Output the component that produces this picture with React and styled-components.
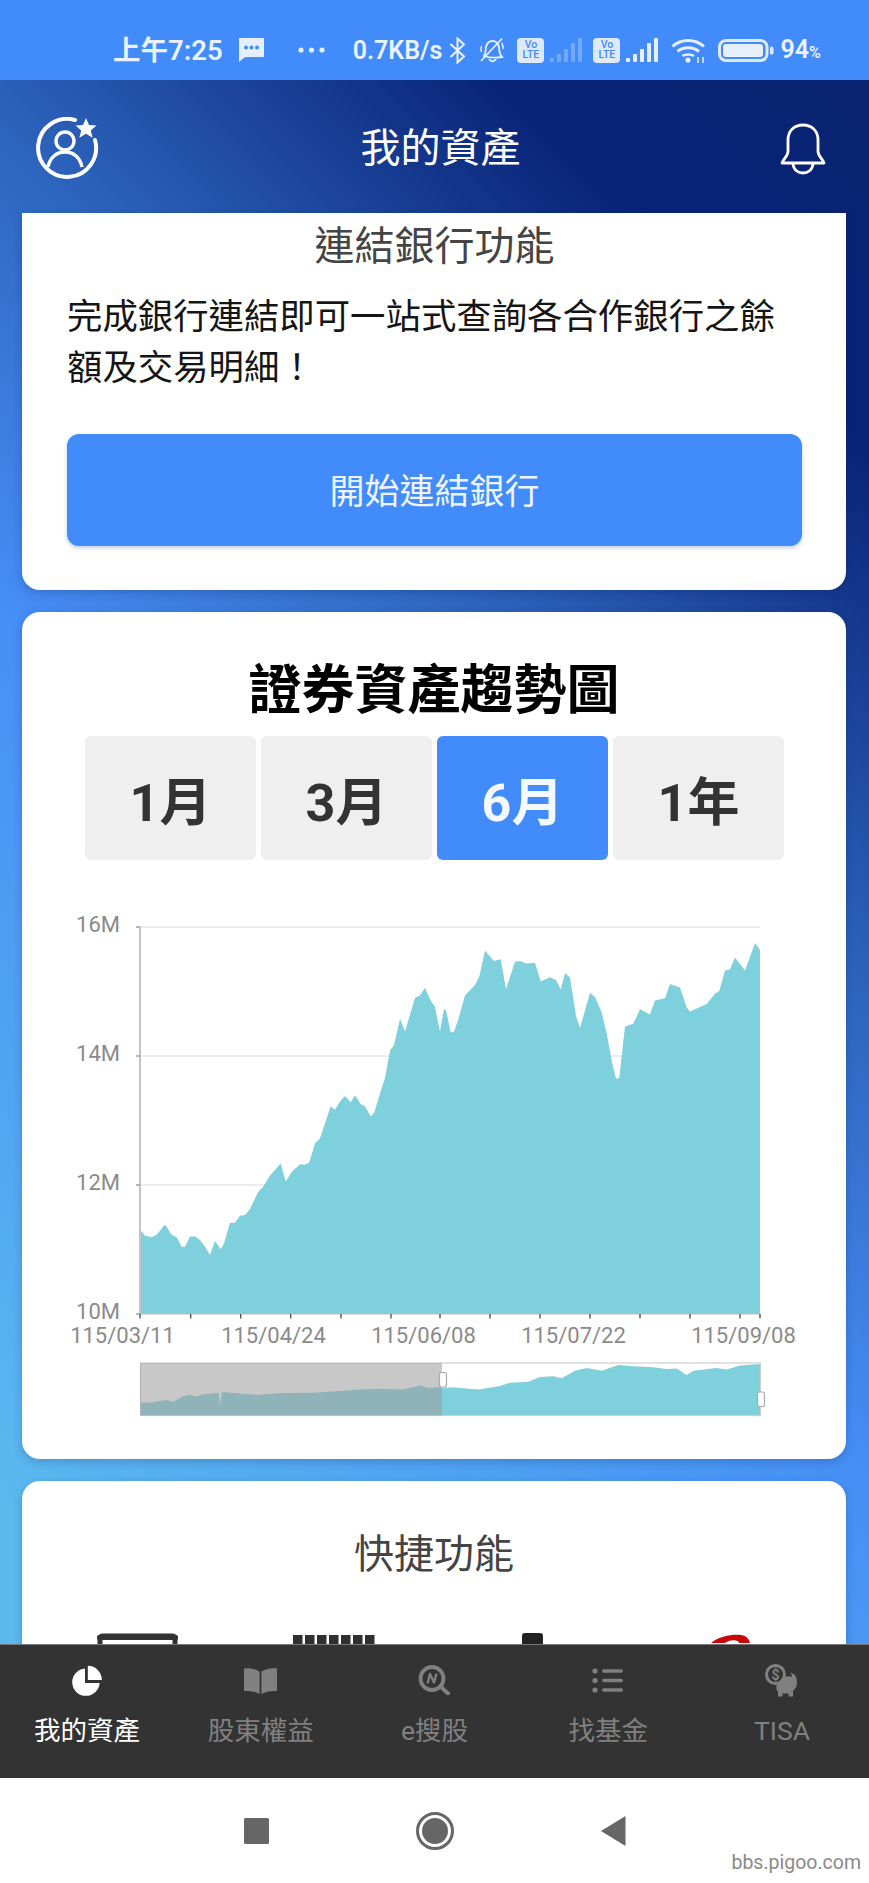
import React from 'react';
import styled, { createGlobalStyle } from 'styled-components';

const FONT = `Roboto, "Noto Sans CJK TC", sans-serif`;

const Global = createGlobalStyle`
  html, body { margin: 0; padding: 0; background: #fff; }
  * { box-sizing: border-box; }
`;

const Phone = styled.div`
  width: 869px;
  height: 1883px;
  display: flex;
  flex-direction: column;
  overflow: hidden;
  font-family: ${FONT};
  position: relative;
`;

/* ---------- status bar ---------- */
const StatusBar = styled.div`
  flex: 0 0 80px;
  background: #428bfa;
  display: flex;
  align-items: center;
  padding: 20px 0 0 113px;
  color: #eaf2ff;
`;
const StatusText = styled.span`
  font-size: ${p => p.$size || 25}px;
  font-weight: 600;
  line-height: 30px;
  padding-top: 2px;
  margin-left: ${p => p.$ml || 0}px;
  white-space: nowrap;
`;
const Percent = styled.span`
  font-size: 16px;
`;
const StatusIcon = styled.svg`
  display: block;
  flex: none;
  margin-left: ${p => p.$ml || 0}px;
  opacity: ${p => p.$dim ? 0.3 : 1};
`;
const VolteTile = styled.span`
  flex: none;
  width: 27px;
  height: 25px;
  margin-left: ${p => p.$ml}px;
  border-radius: 4px;
  background: #dfe9fc;
  color: #428bfa;
  display: flex;
  flex-direction: column;
  align-items: center;
  justify-content: center;
  font: 500 10.5px/10.5px Roboto, sans-serif;
`;

/* ---------- page ---------- */
const Main = styled.main`
  flex: 1 1 0;
  min-height: 0;
  overflow: hidden;
  padding: 0 23px 0 22px;
  background: linear-gradient(45deg, #5bb9ee 0%, #5bb9ee 6%, #458ef5 43%, #2b60b8 64%, #082377 85%, #0a2472 100%);
`;
const Header = styled.header`
  height: 133px;
  margin: 0 19px 0 13px;
  padding-top: 5px;
  display: flex;
  align-items: center;
  justify-content: space-between;
`;
const HeaderTitle = styled.h1`
  margin: 0 0 0 3px;
  font-size: 40px;
  font-weight: 400;
  line-height: 48px;
  color: #fff;
`;
const HeaderIcon = styled.svg`
  display: block;
`;
const Card = styled.section`
  background: #fff;
  border-radius: ${p => p.$flat ? '0 0 18px 18px' : '18px'};
  padding: ${p => p.$pad};
  margin-bottom: 22px;
  box-shadow: 0 3px 10px rgba(10, 30, 90, 0.22);
`;
const SectionTitle = styled.h2`
  margin: 0;
  text-align: center;
  font-size: 40px;
  font-weight: 400;
  line-height: 40px;
  color: #444;
`;
const Paragraph = styled.p`
  margin: 25px 0 40px;
  font-size: 35.4px;
  line-height: 51px;
  color: #151515;
`;
const PrimaryButton = styled.button`
  display: block;
  width: 100%;
  height: 112px;
  border: 0;
  border-radius: 12px;
  padding: 0 0 4px;
  background: #428bfa;
  color: #eef5ff;
  font-family: ${FONT};
  font-size: 35px;
  font-weight: 400;
  box-shadow: 0 2px 4px rgba(50, 90, 160, 0.3);
`;
const ChartTitle = styled.h2`
  margin: 0 0 15px;
  text-align: center;
  font-size: 53px;
  font-weight: 700;
  line-height: 60px;
  color: #000;
`;
const Ranges = styled.div`
  display: grid;
  grid-template-columns: repeat(4, 171px);
  gap: 5px;
  margin: 0 0 39px 41px;
  padding-left: 22px;
`;
const RangeButton = styled.button`
  height: 124px;
  border: 0;
  border-radius: 6px;
  padding: 1px 0 0;
  background: ${p => p.$active ? '#428bfa' : '#efefef'};
  color: ${p => p.$active ? '#f4f8ff' : '#333'};
  font-family: ${FONT};
  font-size: 52px;
  font-weight: 700;
`;
const ChartSvg = styled.svg`
  display: block;
  font-family: Roboto, sans-serif;
`;
const ShortcutRow = styled.div`
  display: grid;
  grid-template-columns: repeat(4, 198px);
  margin-top: 58px;
  justify-items: center;
`;
const ShortcutIcon = styled.svg`
  display: block;
`;

/* ---------- bottom tabs ---------- */
const TabBar = styled.nav`
  flex: 0 0 134px;
  background: #333;
  border-top: 1px solid #777;
  display: grid;
  grid-template-columns: repeat(5, 1fr);
`;
const Tab = styled.div`
  display: flex;
  flex-direction: column;
  align-items: center;
  padding-top: 19px;
  color: ${p => p.$active ? '#fff' : '#808080'};
`;
const TabIconBox = styled.div`
  height: 32px;
  display: flex;
  align-items: center;
  justify-content: center;
`;
const TabLabel = styled.span`
  margin-top: 19px;
  font-size: 26.5px;
  line-height: 32px;
  white-space: nowrap;
`;

/* ---------- android nav ---------- */
const NavBar = styled.div`
  flex: 0 0 105px;
  background: #fff;
  display: flex;
  align-items: center;
  justify-content: center;
  gap: 147px;
  position: relative;
`;
const NavSvg = styled.svg`
  display: block;
`;
const Watermark = styled.span`
  position: absolute;
  right: 8px;
  bottom: 9px;
  font: 400 19.5px/22px Roboto, sans-serif;
  color: #8a8a8a;
`;

/* ---------- chart data (traced) ---------- */
const YS = 2.904;
const z2 = ([x, y]) => [40 + x / 3, 900 + y / YS];
const z3 = ([x, y]) => [420 + x / 3, 900 + y / YS];

const mainPts = [
  ...[[300,960],[315,978],[335,982],[350,975],[375,945],[395,975],[410,982],[425,1010],[435,1010],[450,980],[465,980],[480,990],[495,1010],[510,1033],[525,993],[542,1017],[552,1000],[570,940],[585,940],[600,920],[615,918],[630,900],[655,850],[670,835],[690,803],[722,768],[737,820],[755,793],[780,770],[795,772],[808,765],[825,710],[840,695],[872,602],[885,612],[900,588],[915,572],[932,590],[945,570],[962,595],[975,602],[992,632],[1003,620],[1020,565],[1035,520],[1050,440],[1062,425],[1080,348],[1095,385],[1125,287],[1140,280],[1155,258],[1165,280],[1175,300],[1187,315]].map(z2),
  ...[[45,315],[60,385],[72,320],[78,322],[92,388],[102,385],[115,350],[135,280],[165,250],[178,225],[195,150],[222,180],[242,175],[258,262],[285,182],[300,180],[318,187],[345,185],[362,240],[390,227],[408,235],[422,262],[435,215],[450,228],[468,340],[480,375],[510,272],[525,285],[545,330],[560,390],[575,470],[588,522],[598,520],[615,370],[640,362],[660,320],[690,335],[705,295],[735,288],[750,247],[780,257],[800,315],[810,327],[860,305],[885,275],[898,267],[915,208],[930,205],[945,170],[975,208],[1005,128],[1020,148]].map(z3),
];
const miniPts = [
  ...[[302,1463],[330,1462],[360,1458],[380,1455],[400,1460],[430,1443],[450,1440],[470,1445],[490,1438],[530,1435],[536,1435],[540,1470],[546,1432],[600,1436],[650,1440],[720,1435],[820,1434],[880,1430],[960,1424],[1020,1422],[1090,1424],[1140,1413],[1165,1420]].map(z2),
  ...[[0,1418],[30,1420],[50,1418],[67,1420],[100,1418],[130,1421],[175,1424],[240,1414],[270,1405],[325,1402],[360,1388],[400,1386],[425,1392],[465,1370],[500,1362],[545,1370],[595,1353],[640,1357],[700,1360],[740,1365],[770,1363],[800,1382],[820,1370],[890,1362],[920,1366],[960,1355],[1020,1350]].map(z3),
];
const toArea = (pts, base) =>
  `M${pts[0][0]} ${base} ` + pts.map(p => `L${p[0].toFixed(1)} ${p[1].toFixed(1)}`).join(' ') + ` L${pts[pts.length - 1][0]} ${base} Z`;

const yTicks = [{ y: 928, t: '16M' }, { y: 1057, t: '14M' }, { y: 1186, t: '12M' }, { y: 1315, t: '10M' }];
const xTicks = [140, 190.7, 240.7, 290.7, 341, 391, 440, 490, 540, 590, 640, 690, 740, 760];
const xLabels = [{ x: 122.5, t: '115/03/11' }, { x: 273.5, t: '115/04/24' }, { x: 423.5, t: '115/06/08' }, { x: 573.5, t: '115/07/22' }, { x: 743.5, t: '115/09/08' }];

function Chart() {
  return (
    <ChartSvg width="824" height="545" viewBox="22 900 824 545">
      {yTicks.slice(0, 3).map(g => (
        <line key={g.t} x1="140" x2="760" y1={g.y} y2={g.y} stroke="#e6e6e6" strokeWidth="1.4" />
      ))}
      <path d={toArea(mainPts, 1315)} fill="#7dd0dc" />
      <line x1="140" x2="140" y1="928" y2="1315" stroke="#c4c4c4" strokeWidth="2" />
      <line x1="140" x2="760" y1="1315" y2="1315" stroke="#bdbdbd" strokeWidth="1" />
      {yTicks.map(g => (
        <React.Fragment key={g.t}>
          <line x1="136" x2="140" y1={g.y} y2={g.y} stroke="#999" strokeWidth="1.4" />
          <text x="120" y={g.y + 4.5} textAnchor="end" fontSize="22" fill="#8a8a8a">{g.t}</text>
        </React.Fragment>
      ))}
      {xTicks.map(x => (
        <line key={x} x1={x} x2={x} y1="1315" y2="1319.5" stroke="#555" strokeWidth="1.4" />
      ))}
      {xLabels.map(l => (
        <text key={l.t} x={l.x} y="1344" textAnchor="middle" fontSize="22" fill="#8a8a8a">{l.t}</text>
      ))}
      {/* range slider */}
      <path d={toArea(miniPts, 1416.5)} fill="#7dd0dc" />
      <rect x="140.5" y="1364" width="620" height="52.5" fill="none" stroke="#cfcfcf" strokeWidth="1.2" />
      <rect x="140" y="1364" width="302" height="52.5" fill="rgb(157,157,157)" fillOpacity="0.56" />
      <rect x="439.5" y="1373.5" width="7" height="14.5" rx="2" fill="#fff" stroke="#aaa" strokeWidth="1.2" />
      <rect x="757.5" y="1393" width="7" height="14.5" rx="2" fill="#fff" stroke="#aaa" strokeWidth="1.2" />
    </ChartSvg>
  );
}

/* ---------- small icons ---------- */
const Signal = ({ ml, dim }) => (
  <StatusIcon $ml={ml} $dim={dim} width="33" height="25" viewBox="0 0 33 25" fill="#e6effd">
    <rect x="0" y="20" width="4" height="4" rx="1" />
    <rect x="7" y="16" width="4" height="8" rx="1" />
    <rect x="14" y="11" width="4" height="13" rx="1" />
    <rect x="21" y="5" width="4" height="19" rx="1" />
    <rect x="28" y="0" width="4" height="24" rx="1" />
  </StatusIcon>
);

const PieIcon = () => (
  <svg width="30" height="31" viewBox="0 0 30 31" fill="currentColor">
    <path d="M13 3.5A13.7 13.7 0 1 0 27.6 18H13Z" />
    <path d="M15.8 .8A14 14 0 0 1 29.8 15H15.8Z" />
  </svg>
);
const BookIcon = () => (
  <svg width="33" height="27" viewBox="0 0 33 27" fill="currentColor">
    <path d="M0 1.5C6 .5 11 2 15.6 4.5V27C11 24.5 6 23.5 0 24Z" />
    <path d="M33 1.5C27 .5 22 2 17.4 4.5V27C22 24.5 27 23.5 33 24Z" />
  </svg>
);
const SearchIcon = () => (
  <svg width="32" height="30" viewBox="0 0 32 30" fill="none" stroke="currentColor">
    <circle cx="14" cy="13.5" r="11.5" strokeWidth="3.8" />
    <path d="M22.5 21.5L30 28.5" strokeWidth="3.8" strokeLinecap="round" />
    <path d="M9.5 18.5L12 9L16 17.5L18.5 8.5" strokeWidth="2.4" strokeLinejoin="round" />
  </svg>
);
const ListIcon = () => (
  <svg width="32" height="27" viewBox="0 0 32 27" fill="currentColor">
    <circle cx="3" cy="4" r="2.6" /><rect x="10" y="2.2" width="21" height="3.6" rx="1.8" />
    <circle cx="3" cy="13.5" r="2.6" /><rect x="10" y="11.7" width="21" height="3.6" rx="1.8" />
    <circle cx="3" cy="23" r="2.6" /><rect x="10" y="21.2" width="21" height="3.6" rx="1.8" />
  </svg>
);
const PiggyIcon = () => (
  <svg width="34" height="33" viewBox="0 0 34 33" fill="currentColor">
    <path d="M14 17C19 12 24 11.5 27 13L26 8.5L30 11C31 13 32 15 32 19C32 23 30 25 28 27V32.5H23.5V29.5H17.5V32.5H13V28C10.5 25 11 20 14 17Z" />
    <circle cx="10.5" cy="10.5" r="10.5" />
    <circle cx="10.5" cy="10.5" r="7.5" fill="#333" />
    <text x="10.5" y="15.5" textAnchor="middle" fontSize="14" fontWeight="700" fill="#808080" fontFamily="Roboto, sans-serif">$</text>
  </svg>
);

const tabs = [
  { label: '我的資產', Icon: PieIcon, active: true },
  { label: '股東權益', Icon: BookIcon },
  { label: 'e搜股', Icon: SearchIcon },
  { label: '找基金', Icon: ListIcon },
  { label: 'TISA', Icon: PiggyIcon },
];

export default function App() {
  return (
    <Phone>
      <Global />
      <StatusBar>
        <StatusText $size={27.5}>上午7:25</StatusText>
        <StatusIcon $ml={15} width="27" height="26" viewBox="0 0 27 26">
          <path d="M1 1H26V20H7L1 25Z" fill="#e6effd" />
          <circle cx="8" cy="10.5" r="2" fill="#428bfa" /><circle cx="13.5" cy="10.5" r="2" fill="#428bfa" /><circle cx="19" cy="10.5" r="2" fill="#428bfa" />
        </StatusIcon>
        <StatusIcon $ml={33} width="27" height="6" viewBox="0 0 27 6" fill="#e6effd">
          <circle cx="3" cy="3" r="2.6" /><circle cx="13.5" cy="3" r="2.6" /><circle cx="24" cy="3" r="2.6" />
        </StatusIcon>
        <StatusText $ml={28}>0.7KB/s</StatusText>
        <StatusIcon $ml={7} width="17" height="27" viewBox="0 0 17 27" fill="none" stroke="#e6effd" strokeWidth="2">
          <path d="M1.5 7L15 19.5L8.5 25.5V1.5L15 7.5L1.5 20" />
        </StatusIcon>
        <StatusIcon $ml={12} width="27" height="26" viewBox="0 0 27 26" fill="none" stroke="#e6effd" strokeWidth="1.8">
          <path d="M6 19C8 16 7.5 13 8 10C9 6 12 4 14.5 4C18 4 20.5 7 21 10.5C21.5 14 21 17 24 20C17 21 11 21 6 19Z" />
          <path d="M11 22C13 25 16 25 18 22" />
          <path d="M3 24L24 1.5" />
          <path d="M3.5 9C2.5 11 2.5 13 3.5 15M23.5 6C25 8 25.5 10 25 12" strokeWidth="1.4" />
        </StatusIcon>
        <VolteTile $ml={12}><span>Vo</span><span>LTE</span></VolteTile>
        <Signal ml={6} dim />
        <VolteTile $ml={10}><span>Vo</span><span>LTE</span></VolteTile>
        <Signal ml={6} />
        <StatusIcon $ml={12} width="35" height="25" viewBox="0 0 35 25" fill="none" stroke="#e6effd" strokeWidth="3">
          <path d="M1.5 8.5C10 .5 24 .5 33 8.5" />
          <path d="M6.5 13.5C12 8.5 22 8.5 28 13.5" />
          <path d="M11.5 18C14 16 20 16 23 18" strokeWidth="2.6" />
          <circle cx="17" cy="22" r="2.6" fill="#e6effd" stroke="none" />
          <path d="M27 25V19M32 25V19" strokeWidth="1.5" />
        </StatusIcon>
        <StatusIcon $ml={12} width="56" height="23" viewBox="0 0 56 23">
          <rect x="1.5" y="1.5" width="47.5" height="20" rx="6.5" fill="none" stroke="#dfe9fc" strokeWidth="3" />
          <rect x="5" y="5" width="40" height="13" rx="3" fill="#e6effd" />
          <rect x="52" y="7.5" width="3.5" height="8" rx="1.5" fill="#dfe9fc" />
        </StatusIcon>
        <StatusText $ml={6}>94<Percent>%</Percent></StatusText>
      </StatusBar>

      <Main>
        <Header>
          <HeaderIcon width="64" height="64" viewBox="0 0 64 64" fill="none" stroke="#fff">
            <path d="M60 23A29 29 0 1 1 40 3" strokeWidth="4" strokeLinecap="round" />
            <circle cx="30" cy="24" r="9" strokeWidth="3.4" />
            <path d="M13 50C15 40 22 35 30 35C38 35 45 40 47 50" strokeWidth="3.4" />
            <path d="M51 1L54 8L61.5 8.5L55.8 13.4L57.6 20.8L51 16.8L44.4 20.8L46.2 13.4L40.5 8.5L48 8Z" fill="#fff" stroke="none" />
          </HeaderIcon>
          <HeaderTitle>我的資產</HeaderTitle>
          <HeaderIcon width="48" height="52" viewBox="0 0 48 52" fill="none" stroke="#fff" strokeWidth="2.8">
            <path d="M3 40C4 36 9 34 9 28V17C9 8 15 2 24 2C33 2 39 8 39 17V28C39 34 44 36 45 40Z" strokeLinejoin="round" />
            <path d="M14 41C15 53 33 53 34 41" />
          </HeaderIcon>
        </Header>

        <Card $flat $pad="14px 44px 44px 45px">
          <SectionTitle>連結銀行功能</SectionTitle>
          <Paragraph>完成銀行連結即可一站式查詢各合作銀行之餘額及交易明細！</Paragraph>
          <PrimaryButton>開始連結銀行</PrimaryButton>
        </Card>

        <Card $pad="49px 0 15px">
          <ChartTitle>證券資產趨勢圖</ChartTitle>
          <Ranges>
            <RangeButton>1月</RangeButton>
            <RangeButton>3月</RangeButton>
            <RangeButton $active>6月</RangeButton>
            <RangeButton>1年</RangeButton>
          </Ranges>
          <Chart />
        </Card>

        <Card $pad="54px 16px 40px">
          <SectionTitle>快捷功能</SectionTitle>
          <ShortcutRow>
            <ShortcutIcon width="81" height="60" viewBox="0 0 81 60" fill="none">
              <path d="M3 60V6Q3 3 6 3H75Q78 3 78 6V60" stroke="#333" strokeWidth="5" />
              <rect x="0" y="2" width="81" height="5" rx="2" fill="#333" />
            </ShortcutIcon>
            <ShortcutIcon width="84" height="60" viewBox="0 0 84 60" fill="#2f2f2f">
              {[0, 12, 24, 36, 48, 60, 72].map(x => <rect key={x} x={x} y="2" width="9.5" height="50" />)}
            </ShortcutIcon>
            <ShortcutIcon width="22" height="60" viewBox="0 0 22 60">
              <rect x="0" y="0" width="21" height="60" rx="3" fill="#222" />
            </ShortcutIcon>
            <ShortcutIcon width="40" height="60" viewBox="0 0 40 60">
              <path d="M0 10C8 3 22 1 30 2C36 3 38 6 39 10H28C28 7 20 6 14 10Z" fill="#c80808" />
            </ShortcutIcon>
          </ShortcutRow>
        </Card>
      </Main>

      <TabBar>
        {tabs.map(({ label, Icon, active }) => (
          <Tab key={label} $active={active}>
            <TabIconBox><Icon /></TabIconBox>
            <TabLabel>{label}</TabLabel>
          </Tab>
        ))}
      </TabBar>

      <NavBar>
        <NavSvg width="25" height="26" viewBox="0 0 25 26"><rect width="25" height="26" rx="1.5" fill="#666" /></NavSvg>
        <NavSvg width="38" height="38" viewBox="0 0 38 38">
          <circle cx="19" cy="19" r="17.5" fill="none" stroke="#666" strokeWidth="3" />
          <circle cx="19" cy="19" r="13" fill="#666" />
        </NavSvg>
        <NavSvg width="25" height="30" viewBox="0 0 25 30"><path d="M24.5 0V30L0 15Z" fill="#666" /></NavSvg>
        <Watermark>bbs.pigoo.com</Watermark>
      </NavBar>
    </Phone>
  );
}
